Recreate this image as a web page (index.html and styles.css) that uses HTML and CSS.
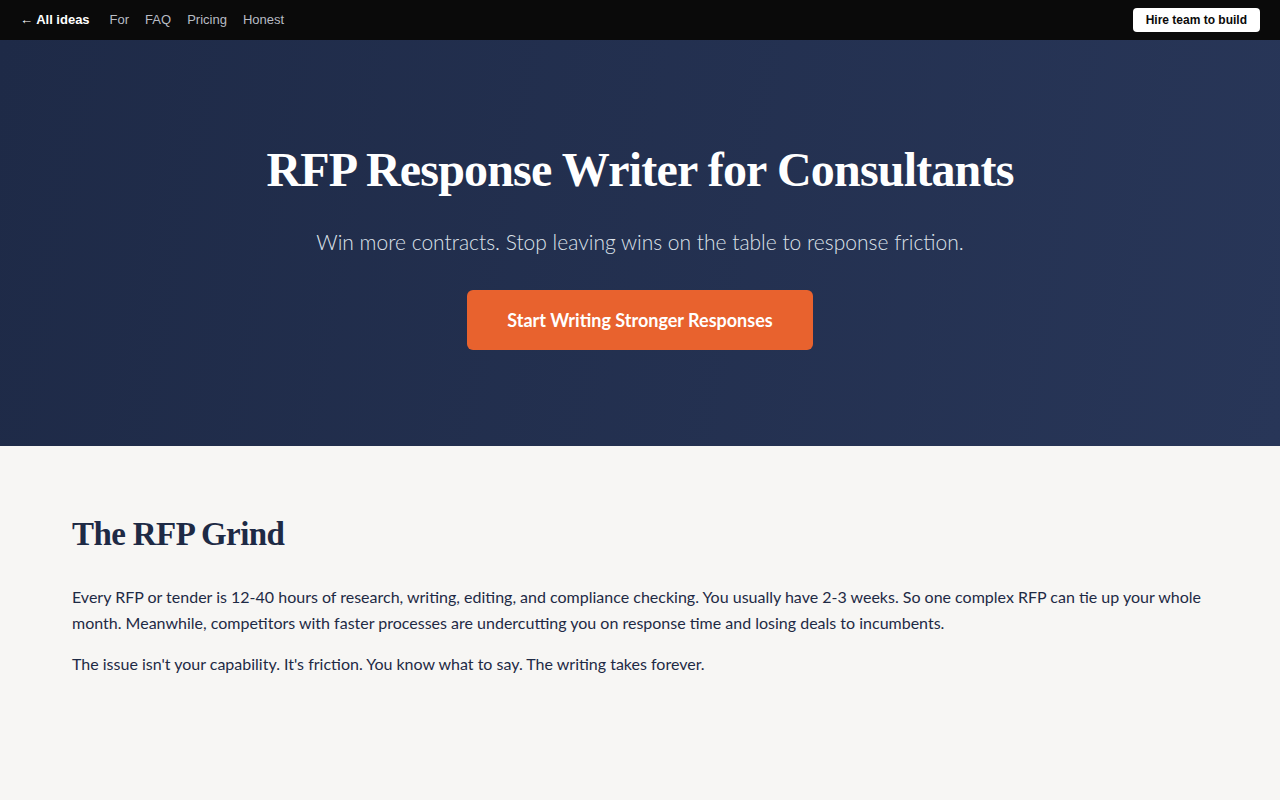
FILE: index.html
```html
<!DOCTYPE html>
<html>
    <head>
        <meta charset="utf-8">
        <link rel="stylesheet" href="styles.css">
        <meta name="viewport" content="width=device-width, initial-scale=1.0">
        <title>RFP Response Writer for Consultants</title>
    </head>
    <body>
        <nav class="topbar">
            <div class="topbar-links">
                <a class="back" href="#">&larr; All ideas</a>
                <a href="#">For</a>
                <a href="#">FAQ</a>
                <a href="#">Pricing</a>
                <a href="#">Honest</a>
            </div>
            <a class="hire" href="#">Hire team to build</a>
        </nav>

        <header class="hero">
            <h1 class="hero-title">RFP Response Writer for Consultants</h1>
            <p class="hero-sub">Win more contracts. Stop leaving wins on the table to response friction.</p>
            <a class="cta" href="#">Start Writing Stronger Responses</a>
        </header>

        <section class="section">
            <h2 class="section-title">The RFP Grind</h2>
            <p>Every RFP or tender is 12-40 hours of research, writing, editing, and compliance checking. You usually have 2-3 weeks. So one complex RFP can tie up your whole month. Meanwhile, competitors with faster processes are undercutting you on response time and losing deals to incumbents.</p>
            <p>The issue isn't your capability. It's friction. You know what to say. The writing takes forever.</p>
        </section>
    </body>
</html>
```

FILE: styles.css
```css
html { padding: 0; }
body {
    margin: 0;
    padding: 0;
    background: #f7f6f4;
    color: #1e2a45;
    font-family: Lato, "Noto Sans", sans-serif;
    font-size: 16px;
}
a { text-decoration: none; }

/* top bar */
.topbar {
    height: 40px;
    background: #0a0a0a;
    display: flex;
    align-items: center;
    justify-content: space-between;
    padding: 0 20px 2px;
    box-sizing: border-box;
    font-family: "Liberation Sans", Arial, sans-serif;
    font-size: 13px;
}
.topbar-links { display: flex; gap: 16px; align-items: center; }
.topbar-links a { color: #b8bcc4; }
.topbar-links .back { color: #fff; font-weight: bold; margin-right: 4px; }
.hire {
    background: #fff;
    color: #0a0a0a;
    font-weight: bold;
    font-size: 12px;
    line-height: 14px;
    padding: 5px 13px;
    margin-top: 2px;
    border-radius: 4px;
}

/* hero */
.hero {
    height: 406px;
    box-sizing: border-box;
    background: linear-gradient(100deg, #1e2a47 0%, #283658 100%);
    color: #fff;
    text-align: center;
    padding-top: 100px;
}
.hero-title {
    font-family: "Liberation Serif", serif;
    font-weight: bold;
    font-size: 48px;
    line-height: 60px;
    margin: 0;
    letter-spacing: -0.8px;
}
.hero-sub {
    font-size: 21px;
    color: #dde2ea;
    margin: 29px 0 36px;
    font-weight: 300;
}
.cta {
    display: inline-block;
    background: #e8622e;
    color: #fff;
    font-weight: bold;
    font-size: 18px;
    padding: 0 40px;
    line-height: 60px;
    width: 266px;
    border-radius: 6px;
}

/* content */
.section { padding: 66px 72px; }
.section-title {
    font-family: "Liberation Serif", serif;
    font-weight: bold;
    font-size: 33px;
    line-height: 44px;
    letter-spacing: -0.6px;
    margin: 0 0 28px;
}
.section p {
    line-height: 26px;
    margin: 0 0 15px;
}
```
